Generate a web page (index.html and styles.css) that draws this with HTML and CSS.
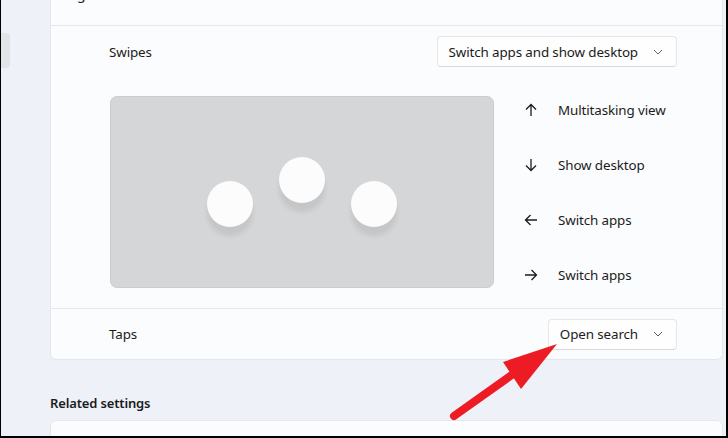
FILE: index.html
```html
<!DOCTYPE html>
<html lang="en">
<head>
<meta charset="utf-8">
<link rel="stylesheet" href="styles.css">
</head>
<body>
<div class="page">
  <nav class="nav"><div class="nav-sel"></div></nav>
  <main class="main">
    <section class="card">
      <div class="card-head"><span class="head-text">g</span></div>
      <div class="row swipes">
        <div class="row-line">
          <span class="label">Swipes</span>
          <button class="dropdown">Switch apps and show desktop<svg class="chev" width="10" height="6" viewBox="0 0 10 6"><path d="M1 1l4 4 4-4" fill="none" stroke="#5f6368" stroke-width="1"/></svg></button>
        </div>
        <div class="swipe-body">
          <div class="pad">
            <span class="dot"></span><span class="dot mid"></span><span class="dot"></span>
          </div>
          <ul class="dirs">
            <li><svg class="ico" width="14" height="14" viewBox="0 0 14 14"><path d="M7 13V1.5M2 6.5l5-5 5 5" fill="none" stroke="#1b1b1b" stroke-width="1.3"/></svg>Multitasking view</li>
            <li><svg class="ico" width="14" height="14" viewBox="0 0 14 14"><path d="M7 1v11.5M2 7.5l5 5 5-5" fill="none" stroke="#1b1b1b" stroke-width="1.3"/></svg>Show desktop</li>
            <li><svg class="ico" width="14" height="14" viewBox="0 0 14 14"><path d="M13 7H1.5M6.5 2l-5 5 5 5" fill="none" stroke="#1b1b1b" stroke-width="1.3"/></svg>Switch apps</li>
            <li><svg class="ico" width="14" height="14" viewBox="0 0 14 14"><path d="M1 7h11.5M7.5 2l5 5-5 5" fill="none" stroke="#1b1b1b" stroke-width="1.3"/></svg>Switch apps</li>
          </ul>
        </div>
      </div>
      <div class="row taps">
        <span class="label">Taps</span>
        <button class="dropdown">Open search<svg class="chev" width="10" height="6" viewBox="0 0 10 6"><path d="M1 1l4 4 4-4" fill="none" stroke="#5f6368" stroke-width="1"/></svg></button>
      </div>
    </section>
    <h2 class="related">Related settings</h2>
    <section class="card card-next"></section>
  </main>
  <svg class="callout" width="140" height="100" viewBox="440 330 140 100">
    <path d="M454 416 L516 372" stroke="#ed1c24" stroke-width="8" stroke-linecap="round" fill="none"/>
    <path d="M557 344 L503 362 L521 389 Z" fill="#ed1c24"/>
  </svg>
</div>
</body>
</html>
```

FILE: styles.css
```css
* { box-sizing: border-box; }
html, body { margin: 0; padding: 0; }
body {
  width: 728px;
  height: 438px;
  overflow: hidden;
  background: #eef2f8;
  border-left: 1px solid #000;
  border-right: 2px solid #000;
  border-bottom: 2px solid #000;
  font-family: "Noto Sans", "Open Sans", sans-serif;
  font-size: 13.4px;
  letter-spacing: -0.12px;
  color: #1b1b1b;
}
.page {
  position: relative;
  display: flex;
  height: 100%;
}
.nav {
  width: 49px;
  flex: none;
}
.nav-sel {
  margin-top: 33px;
  width: 9px;
  height: 35px;
  background: #e1e4e8;
  border-radius: 0 4px 4px 0;
}
.main {
  flex: 1;
  padding-right: 3px;
}
.card {
  background: #fbfcfd;
  border: 1px solid #e3e6ea;
  border-top: none;
  border-radius: 0 0 6px 6px;
}
.card-head {
  height: 26px;
  border-bottom: 1px solid #e5e8eb;
  padding-left: 26px;
  overflow: hidden;
}
.head-text {
  display: block;
  margin-top: -16px;
  line-height: 20px;
  font-size: 14px;
}
.row {
  padding: 0 45px 0 58px;
}
.row-line {
  display: flex;
  justify-content: space-between;
  align-items: center;
  padding-top: 10px;
}
.swipes {
  padding-bottom: 19px;
  border-bottom: 1px solid #e5e8eb;
}
.taps {
  display: flex;
  justify-content: space-between;
  align-items: center;
  height: 50px;
}
.label { line-height: 20px; }
.dropdown {
  display: flex;
  align-items: center;
  height: 31px;
  padding: 0 13px 0 11px;
  background: #fefefe;
  border: 1px solid #e4e6e9;
  border-bottom-color: #d8dadd;
  border-radius: 4px;
  font: inherit;
  letter-spacing: inherit;
  color: inherit;
}
.chev { margin-left: 15px; }
.swipe-body {
  display: flex;
  margin-top: 29px;
}
.pad {
  width: 384px;
  height: 192px;
  margin-left: 1px;
  background: #d4d6d7;
  border: 1px solid #cbcdce;
  border-radius: 7px;
  display: flex;
  justify-content: center;
  align-items: flex-start;
  gap: 26px;
  padding-top: 84px;
}
.dot {
  width: 46px;
  height: 46px;
  border-radius: 50%;
  background: #fcfcfd;
  box-shadow: 0 9px 5px rgba(0,0,0,0.08);
}
.dot.mid { margin-top: -24px; }
.dirs {
  list-style: none;
  margin: 0 0 0 30px;
  padding: 0;
  display: flex;
  flex-direction: column;
  gap: 27px;
}
.dirs li {
  display: flex;
  align-items: center;
  height: 28px;
}
.ico { margin-right: 20px; flex: none; }
.related {
  margin: 33px 0 7px 0;
  font-size: 13px;
  font-weight: 600;
  line-height: 20px;
  letter-spacing: -0.15px;
}
.card-next {
  height: 17px;
  border-top: 1px solid #e3e6ea;
  border-radius: 6px 6px 0 0;
}
.callout {
  position: absolute;
  left: 439px;
  top: 330px;
}
```
